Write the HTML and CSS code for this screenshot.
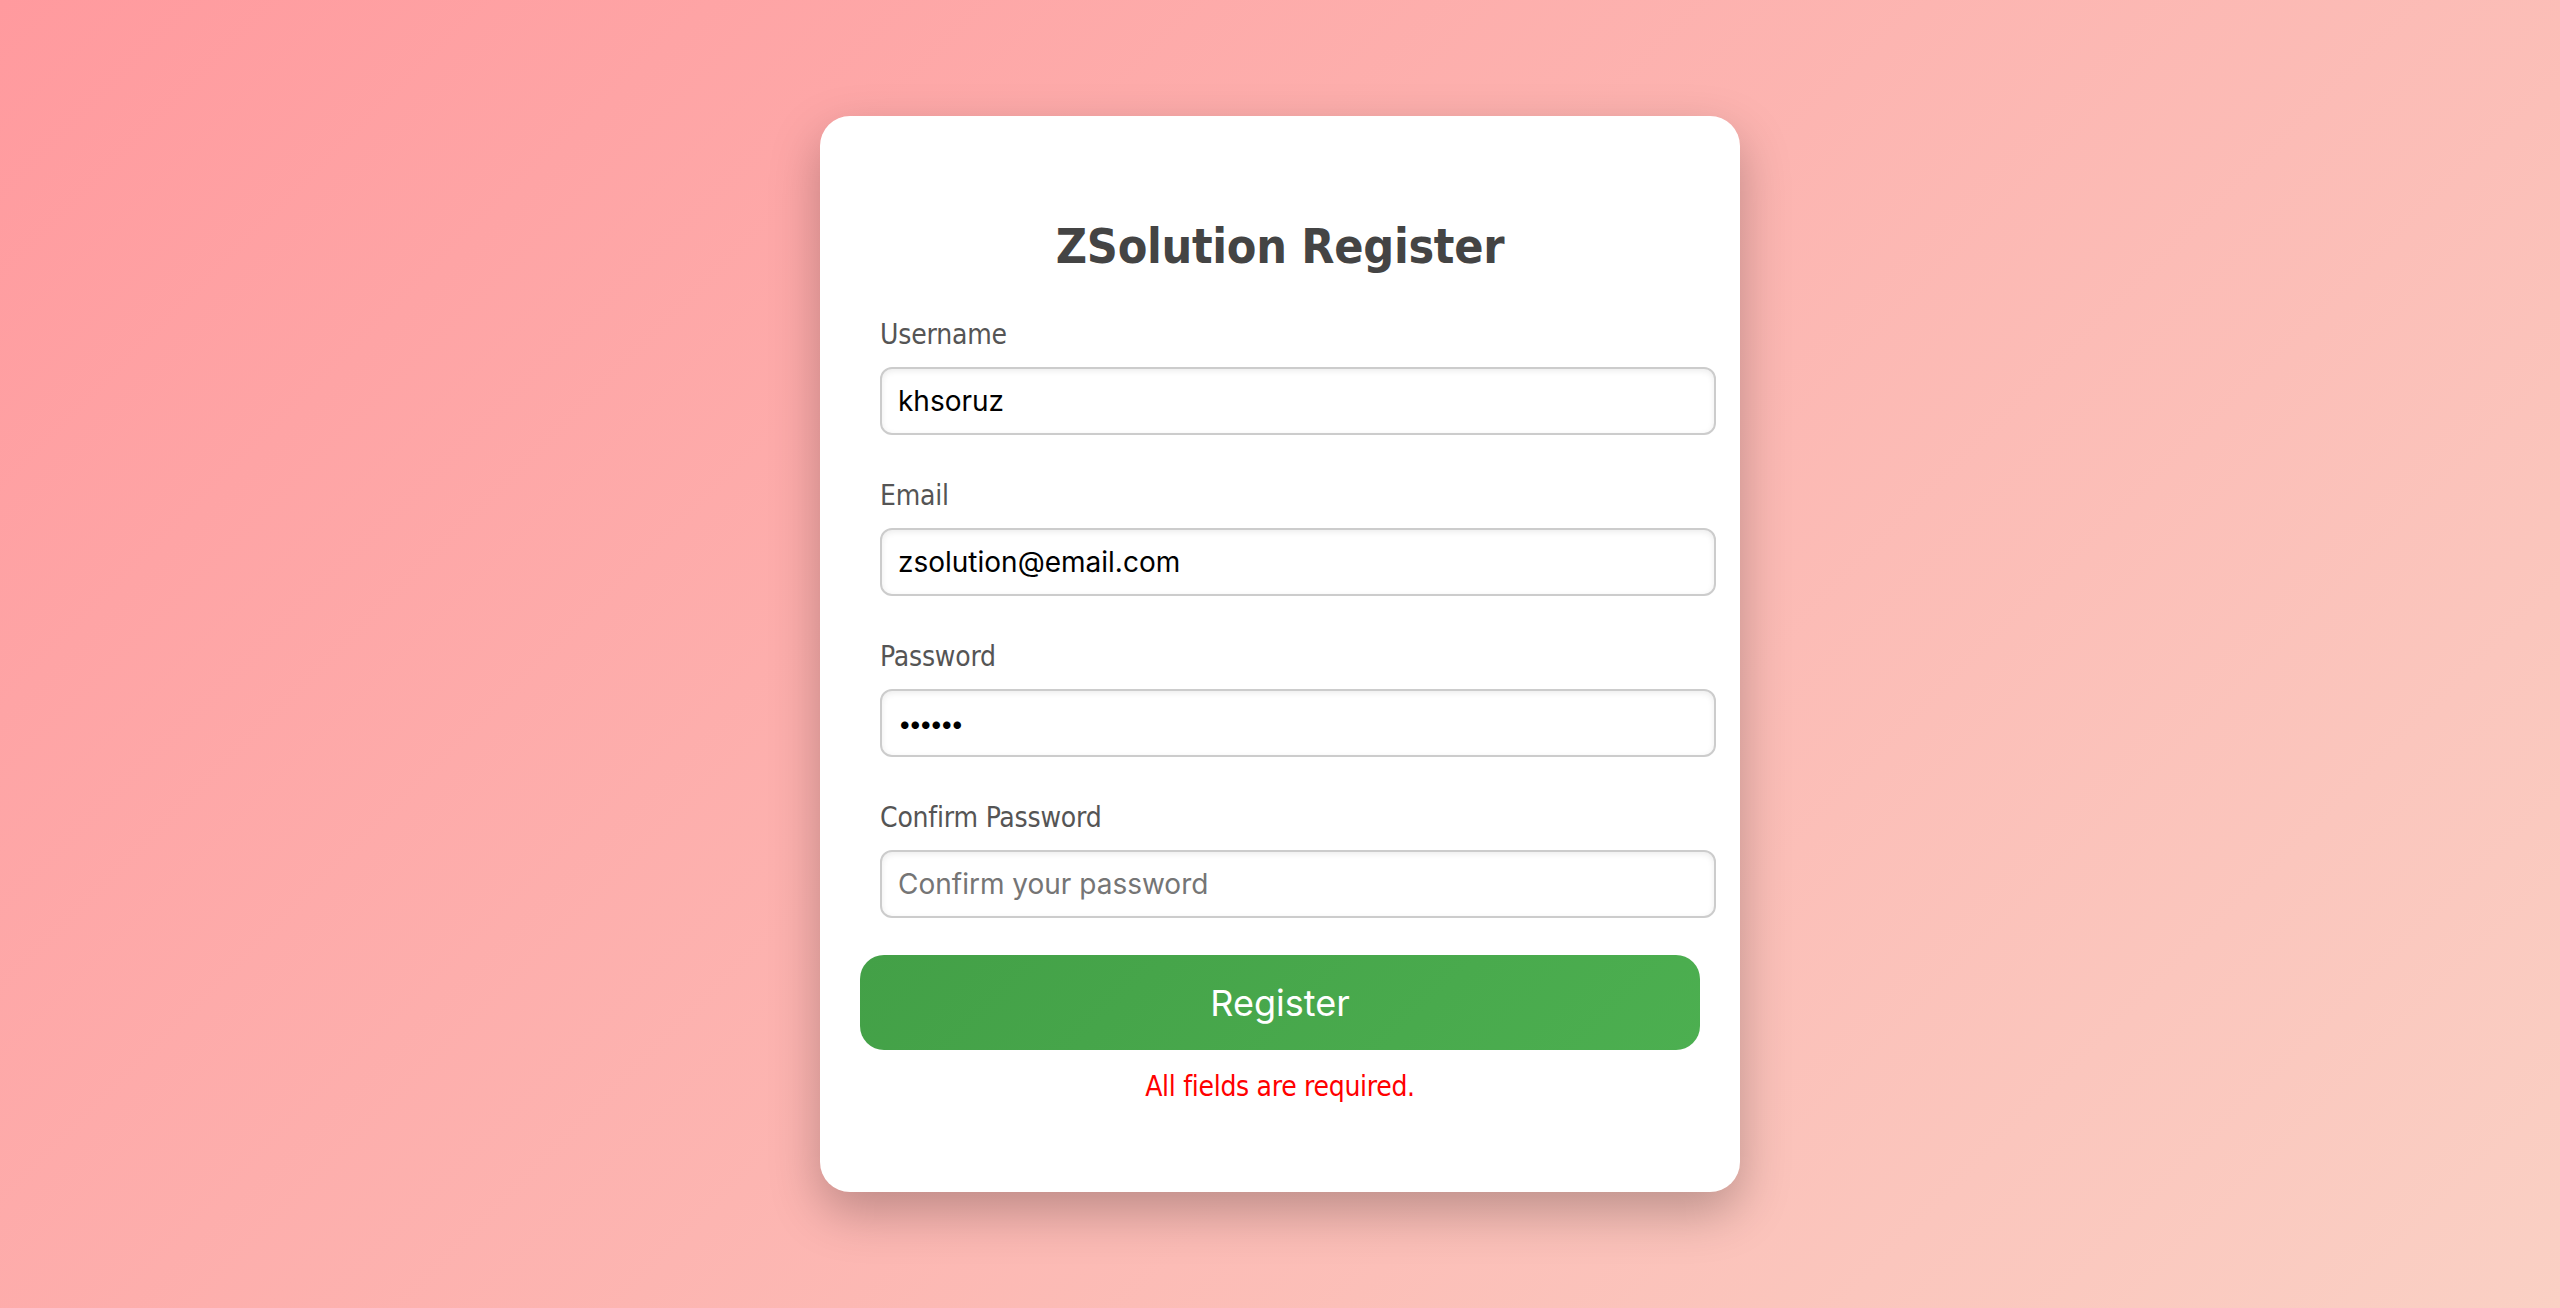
FILE: index.html
```html
<!DOCTYPE html>
<html lang="en">
<head>
<meta charset="utf-8">
<title>ZSolution Register</title>
<link rel="stylesheet" href="styles.css">
</head>
<body>
  <main class="card">
    <h2 class="title">ZSolution Register</h2>
    <form class="form">
      <div class="group">
        <label class="label" for="username">Username</label>
        <input class="input" id="username" type="text" value="khsoruz">
      </div>
      <div class="group">
        <label class="label" for="email">Email</label>
        <input class="input" id="email" type="email" value="zsolution@email.com">
      </div>
      <div class="group">
        <label class="label" for="password">Password</label>
        <input class="input input-secret" id="password" type="password" value="123456">
      </div>
      <div class="group">
        <label class="label" for="confirm">Confirm Password</label>
        <input class="input" id="confirm" type="password" placeholder="Confirm your password">
      </div>
      <button class="btn" type="button">Register</button>
      <p class="error">All fields are required.</p>
    </form>
  </main>
</body>
</html>
```

FILE: styles.css
```css
html, body {
  margin: 0;
  padding: 0;
}

body {
  height: 100vh;
  display: flex;
  align-items: center;
  justify-content: center;
  background: linear-gradient(135deg, #ff9a9e 0%, #fad0c4 100%);
  font-family: "DejaVu Sans Condensed", "DejaVu Sans", sans-serif;
  font-stretch: condensed;
}

.card {
  width: 800px;
  padding: 60px 60px 88px;
  background: #ffffff;
  border-radius: 30px;
  box-shadow: 0 20px 50px rgba(0, 0, 0, 0.25);
}

.title {
  margin: 42px 0 44px;
  font-size: 48px;
  line-height: 56px;
  font-weight: bold;
  letter-spacing: -0.3px;
  color: #444444;
  text-align: center;
}

.form {
  display: flex;
  flex-direction: column;
  align-items: center;
}

.group {
  align-self: stretch;
  display: flex;
  flex-direction: column;
  align-items: flex-start;
  margin-bottom: 44px;
}

.label {
  font-size: 28px;
  line-height: 34px;
  letter-spacing: -0.2px;
  color: #555555;
  margin-bottom: 15px;
}

.input {
  box-sizing: content-box;
  width: 100%;
  height: 34px;
  padding: 15px 16px;
  margin: 0;
  border: 2px solid #cccccc;
  border-radius: 12px;
  box-shadow: inset 0 2px 6px rgba(0, 0, 0, 0.08);
  background: #ffffff;
  font-family: Inter, "Noto Sans", sans-serif;
  font-stretch: normal;
  font-size: 28px;
  color: #000000;
  outline: none;
}

.input-secret {
  letter-spacing: -3px;
  font-size: 24px;
}

.input::placeholder {
  color: #757575;
  letter-spacing: 0;
}

.btn {
  box-sizing: content-box;
  width: 100%;
  height: 95px;
  padding: 0 20px;
  margin: -7px 0 0;
  border: none;
  border-radius: 24px;
  background: linear-gradient(135deg, #43a047 0%, #4caf50 100%);
  color: #ffffff;
  font-family: Inter, "Noto Sans", sans-serif;
  font-stretch: normal;
  font-size: 36px;
  cursor: pointer;
}

.error {
  margin: 20px 0 0;
  font-size: 28px;
  line-height: 34px;
  letter-spacing: -0.3px;
  color: #ff0000;
  text-align: center;
}
```
